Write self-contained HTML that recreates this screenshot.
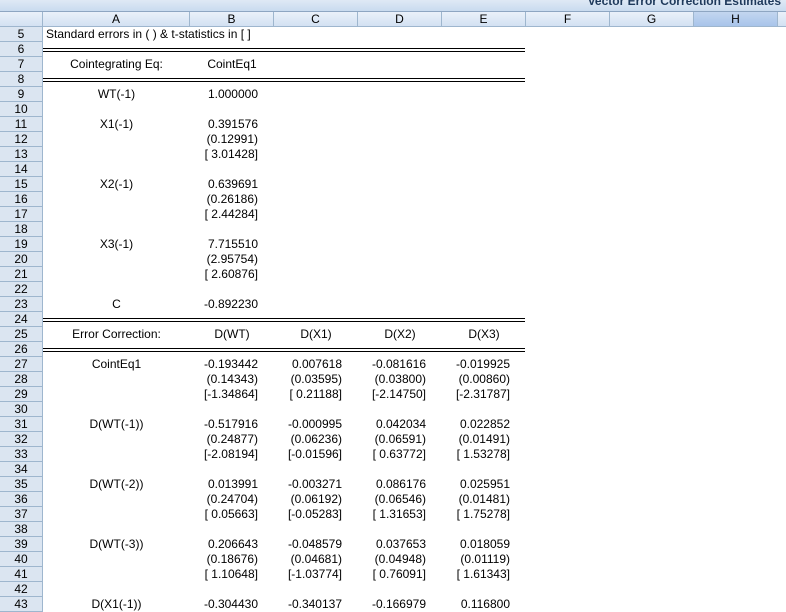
<!DOCTYPE html>
<html><head><meta charset="utf-8"><style>
*{margin:0;padding:0;box-sizing:border-box}
body{width:786px;height:610px;overflow:hidden;background:#fff;font-family:"Liberation Sans",Arial,sans-serif;font-size:12px;color:#000;position:relative}
.title{position:absolute;left:0;top:0;width:786px;height:12px;background:linear-gradient(#dfe9f5,#c9dbef);border-bottom:1px solid #8ea6c2;overflow:hidden}
.title span{position:absolute;right:5px;top:-6px;font-weight:bold;font-size:12px;color:#1e395b}
.hdr{position:absolute;top:12px;height:15px;background:linear-gradient(#eaf1fa,#d3e1f2);border-right:1px solid #9eb6ce;border-bottom:1px solid #9eb6ce;text-align:center;line-height:14px;font-size:12px;color:#000}
.hdr.sel{background:linear-gradient(#c3d6ef,#a8c4ea)}
.rn{position:absolute;left:0;width:43px;height:15px;background:#dbe5f1;border-right:1px solid #9eb6ce;border-bottom:1px solid #9eb6ce;text-align:center;line-height:14px;font-size:12px}
.r{position:absolute;left:43px;height:15px;width:743px}
.c{position:absolute;top:0;height:15px;line-height:15px;white-space:nowrap}
.a{left:0;width:147px;text-align:center}
.b{left:147px;width:84px}.cc{left:231px;width:84px}.d{left:315px;width:84px}.e{left:399px;width:84px}
.n{text-align:right;padding-right:16px}
.h{text-align:center}
.dl{position:absolute;left:43px;width:482px;height:4px;border-top:1px solid #000;border-bottom:1px solid #000}
</style></head><body>
<div class="title"><span>Vector Error Correction Estimates</span></div>
<div class="hdr" style="left:0;width:43px"></div>
<div class="hdr" style="left:43px;width:147px">A</div>
<div class="hdr" style="left:190px;width:84px">B</div>
<div class="hdr" style="left:274px;width:84px">C</div>
<div class="hdr" style="left:358px;width:84px">D</div>
<div class="hdr" style="left:442px;width:84px">E</div>
<div class="hdr" style="left:526px;width:84px">F</div>
<div class="hdr" style="left:610px;width:84px">G</div>
<div class="hdr sel" style="left:694px;width:84px">H</div>
<div class="hdr" style="left:778px;width:20px"></div>

<div class="rn" style="top:27px">5</div><div class="rn" style="top:42px">6</div><div class="rn" style="top:57px">7</div><div class="rn" style="top:72px">8</div><div class="rn" style="top:87px">9</div><div class="rn" style="top:102px">10</div><div class="rn" style="top:117px">11</div><div class="rn" style="top:132px">12</div><div class="rn" style="top:147px">13</div><div class="rn" style="top:162px">14</div><div class="rn" style="top:177px">15</div><div class="rn" style="top:192px">16</div><div class="rn" style="top:207px">17</div><div class="rn" style="top:222px">18</div><div class="rn" style="top:237px">19</div><div class="rn" style="top:252px">20</div><div class="rn" style="top:267px">21</div><div class="rn" style="top:282px">22</div><div class="rn" style="top:297px">23</div><div class="rn" style="top:312px">24</div><div class="rn" style="top:327px">25</div><div class="rn" style="top:342px">26</div><div class="rn" style="top:357px">27</div><div class="rn" style="top:372px">28</div><div class="rn" style="top:387px">29</div><div class="rn" style="top:402px">30</div><div class="rn" style="top:417px">31</div><div class="rn" style="top:432px">32</div><div class="rn" style="top:447px">33</div><div class="rn" style="top:462px">34</div><div class="rn" style="top:477px">35</div><div class="rn" style="top:492px">36</div><div class="rn" style="top:507px">37</div><div class="rn" style="top:522px">38</div><div class="rn" style="top:537px">39</div><div class="rn" style="top:552px">40</div><div class="rn" style="top:567px">41</div><div class="rn" style="top:582px">42</div><div class="rn" style="top:597px">43</div>

<div class="r" style="top:27px"><div class="c" style="left:3px">Standard errors in ( ) &amp; t-statistics in [ ]</div></div>
<div class="dl" style="top:48px"></div>
<div class="r" style="top:57px"><div class="c a">Cointegrating Eq:</div><div class="c b h">CointEq1</div></div>
<div class="dl" style="top:78px"></div>
<div class="r" style="top:87px"><div class="c a">WT(-1)</div><div class="c b n">1.000000</div></div>
<div class="r" style="top:117px"><div class="c a">X1(-1)</div><div class="c b n">0.391576</div></div>
<div class="r" style="top:132px"><div class="c b n">(0.12991)</div></div>
<div class="r" style="top:147px"><div class="c b n">[ 3.01428]</div></div>
<div class="r" style="top:177px"><div class="c a">X2(-1)</div><div class="c b n">0.639691</div></div>
<div class="r" style="top:192px"><div class="c b n">(0.26186)</div></div>
<div class="r" style="top:207px"><div class="c b n">[ 2.44284]</div></div>
<div class="r" style="top:237px"><div class="c a">X3(-1)</div><div class="c b n">7.715510</div></div>
<div class="r" style="top:252px"><div class="c b n">(2.95754)</div></div>
<div class="r" style="top:267px"><div class="c b n">[ 2.60876]</div></div>
<div class="r" style="top:297px"><div class="c a">C</div><div class="c b n">-0.892230</div></div>
<div class="dl" style="top:318px"></div>
<div class="r" style="top:327px"><div class="c a">Error Correction:</div><div class="c b h">D(WT)</div><div class="c cc h">D(X1)</div><div class="c d h">D(X2)</div><div class="c e h">D(X3)</div></div>
<div class="dl" style="top:348px"></div>

<div class="r" style="top:357px"><div class="c a">CointEq1</div><div class="c b n">-0.193442</div><div class="c cc n">0.007618</div><div class="c d n">-0.081616</div><div class="c e n">-0.019925</div></div>
<div class="r" style="top:372px"><div class="c b n">(0.14343)</div><div class="c cc n">(0.03595)</div><div class="c d n">(0.03800)</div><div class="c e n">(0.00860)</div></div>
<div class="r" style="top:387px"><div class="c b n">[-1.34864]</div><div class="c cc n">[ 0.21188]</div><div class="c d n">[-2.14750]</div><div class="c e n">[-2.31787]</div></div>

<div class="r" style="top:417px"><div class="c a">D(WT(-1))</div><div class="c b n">-0.517916</div><div class="c cc n">-0.000995</div><div class="c d n">0.042034</div><div class="c e n">0.022852</div></div>
<div class="r" style="top:432px"><div class="c b n">(0.24877)</div><div class="c cc n">(0.06236)</div><div class="c d n">(0.06591)</div><div class="c e n">(0.01491)</div></div>
<div class="r" style="top:447px"><div class="c b n">[-2.08194]</div><div class="c cc n">[-0.01596]</div><div class="c d n">[ 0.63772]</div><div class="c e n">[ 1.53278]</div></div>

<div class="r" style="top:477px"><div class="c a">D(WT(-2))</div><div class="c b n">0.013991</div><div class="c cc n">-0.003271</div><div class="c d n">0.086176</div><div class="c e n">0.025951</div></div>
<div class="r" style="top:492px"><div class="c b n">(0.24704)</div><div class="c cc n">(0.06192)</div><div class="c d n">(0.06546)</div><div class="c e n">(0.01481)</div></div>
<div class="r" style="top:507px"><div class="c b n">[ 0.05663]</div><div class="c cc n">[-0.05283]</div><div class="c d n">[ 1.31653]</div><div class="c e n">[ 1.75278]</div></div>

<div class="r" style="top:537px"><div class="c a">D(WT(-3))</div><div class="c b n">0.206643</div><div class="c cc n">-0.048579</div><div class="c d n">0.037653</div><div class="c e n">0.018059</div></div>
<div class="r" style="top:552px"><div class="c b n">(0.18676)</div><div class="c cc n">(0.04681)</div><div class="c d n">(0.04948)</div><div class="c e n">(0.01119)</div></div>
<div class="r" style="top:567px"><div class="c b n">[ 1.10648]</div><div class="c cc n">[-1.03774]</div><div class="c d n">[ 0.76091]</div><div class="c e n">[ 1.61343]</div></div>

<div class="r" style="top:597px"><div class="c a">D(X1(-1))</div><div class="c b n">-0.304430</div><div class="c cc n">-0.340137</div><div class="c d n">-0.166979</div><div class="c e n">0.116800</div></div>
</body></html>
